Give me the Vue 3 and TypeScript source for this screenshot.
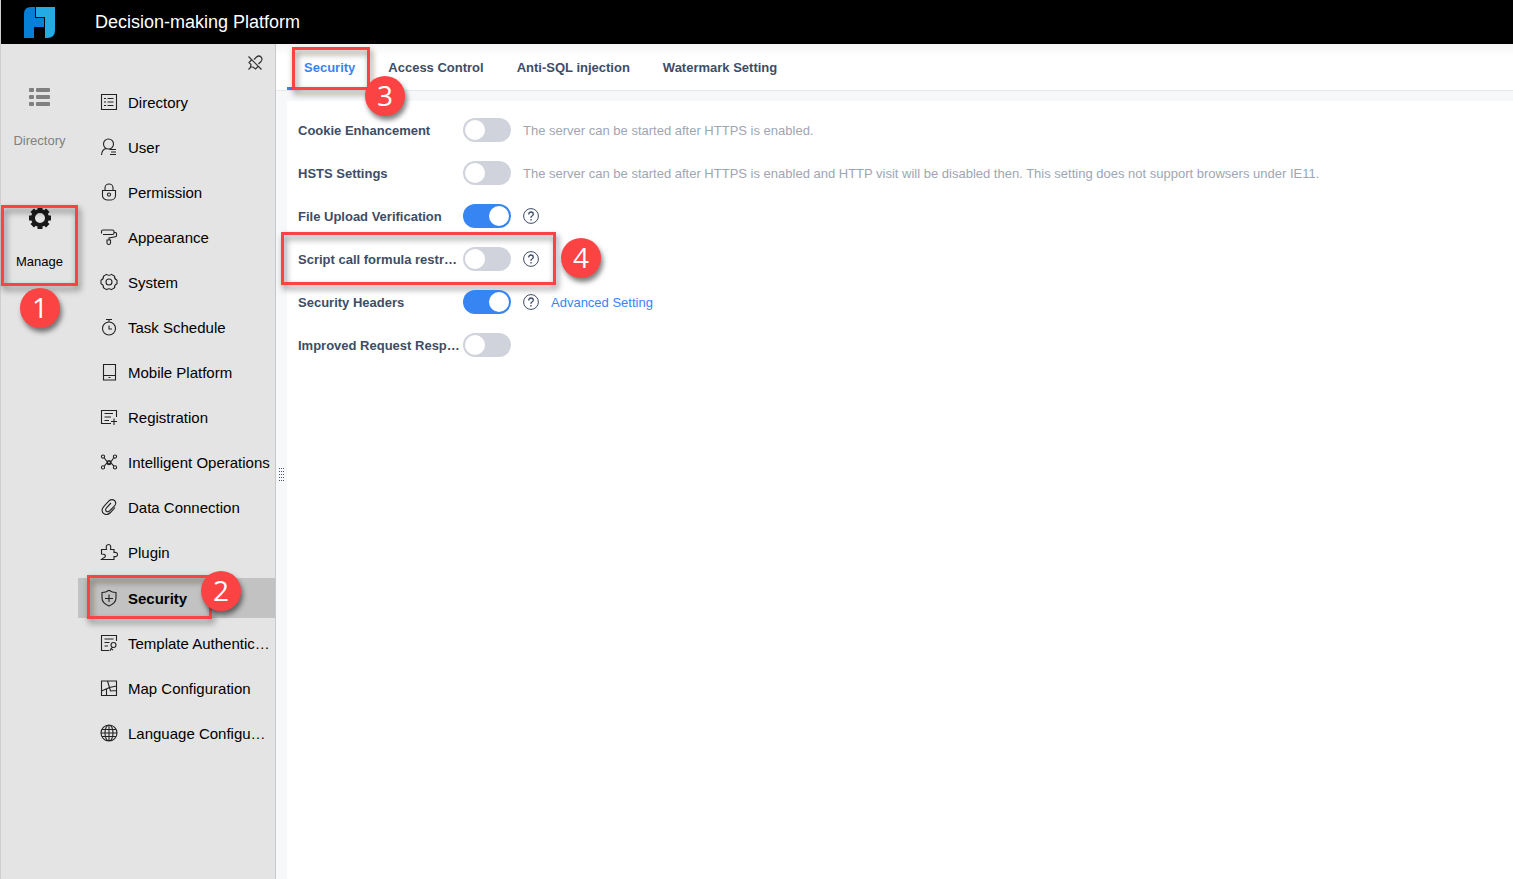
<script setup lang="ts">
import { ref } from 'vue'

interface MenuEntry {
  label: string
  icon: string
}

interface Setting {
  id: string
  label: string
  on: boolean
  hint?: string
  help?: boolean
  link?: string
  step?: string
}

const entries: MenuEntry[] = [
  { label: 'Directory', icon: 'M1.5 1.5h15v15h-15zM7.5 5.5H13.5M7.5 9H13.5M7.5 12.5H13.5M4 5.5H6M4 9H6M4 12.5H6' },
  { label: 'User', icon: 'M1.500 17c.3-4 2.500-6 4.500-6.500M8.5 1a5 5 0 1 1 0 10a5 5 0 1 1 0-10M9.5 11.5H16M11 14H16M10 16.5H16' },
  { label: 'Permission', icon: 'M2.5 7.5h13v5a4.500 4.500 0 0 1-4.500 4.500h-4a4.500 4.500 0 0 1-4.500-4.500zM5 7.5V5a4 4 0 0 1 8 0V7.5M9 10a1.600 1.600 0 1 1 0 3.200a1.600 1.600 0 1 1 0-3.200' },
  { label: 'Appearance', icon: 'M1.5 5.5V3.5q0-1.500 1.500-1.500H12.5q1.500 0 1.500 1.500V5q0 1.500-1.500 1.500H3M14 4.5h1.500q1 0 1 1V7.5q0 1-1 1.200L9 10V12M7 12h3.500v3q0 1.500-1.700 1.500T7 15z' },
  { label: 'System', icon: 'M6.6 1.3Q9 3.3 11.4 1.3L14.6 3.2Q14.1 6.2 17 7.2V10.8Q14.1 11.8 14.6 14.8L11.4 16.7Q9 14.7 6.6 16.7L3.4 14.8Q3.9 11.8 1 10.8V7.2Q3.9 6.2 3.4 3.2ZM9 6a3 3 0 1 1 0 6a3 3 0 1 1 0-6' },
  { label: 'Task Schedule', icon: 'M9 4a6.500 6.500 0 1 1 0 13a6.500 6.500 0 1 1 0-13M9 7.5V11H12M9 4V1.5M6 1.5H12' },
  { label: 'Mobile Platform', icon: 'M3.5 1.5h12v15.500h-12zM3.5 12.5H15.5M8.5 14.5H10.5' },
  { label: 'Registration', icon: 'M16.5 9V2.5H1.5V15.5H11M4.5 5.5H13M4.5 9H11M4.5 12.5H9M14 10.5V17M11 13.5H17' },
  { label: 'Intelligent Operations', icon: 'M3 2a1.600 1.600 0 1 1 0 3.200a1.600 1.600 0 1 1 0-3.200M15 2a1.600 1.600 0 1 1 0 3.200a1.600 1.600 0 1 1 0-3.200M3 12.8a1.600 1.600 0 1 1 0 3.200a1.600 1.600 0 1 1 0-3.200M15 12.8a1.600 1.600 0 1 1 0 3.200a1.600 1.600 0 1 1 0-3.200M9 7.5a2 2 0 1 1 0 4a2 2 0 1 1 0-4M4.2 4.8L9 11.5L13.8 4.8M4.2 13.2L9 7.5L13.8 13.2' },
  { label: 'Data Connection', icon: 'M15 9.5L10.5 14.5Q7.5 17.5 4.5 16Q1 14 2.5 10.5Q3 9 9 2.8Q12 .5 14.5 2.5Q17 5 14.5 8L9.5 13Q7.5 14.5 6 13Q5 11.5 6.5 9.8L11 5' },
  { label: 'Plugin', icon: 'M1.5 16.5Q2.5 15.500 5 14Q6.500 11 1.5 11V6.5H6.5Q5.5 1.5 8.5 1.5T10.5 6.5H14V9.5Q17.5 9 17.5 11.5T14 13.5V16.5Z' },
  { label: 'Security', icon: 'M9 1.2Q12 3.5 16 3.5V9Q16 14 9 17Q2 14 2 9V3.5Q6 3.5 9 1.2M9 5.5V13M5 9.5H13' },
  { label: 'Template Authentic…', icon: 'M16.5 7V1.5H1.5V16.5H9M4.5 5H13.5M4.5 8.5H9.5M4.5 12H8M13.5 8.5a2.500 2.500 0 1 1 0 5a2.500 2.500 0 1 1 0-5M12 13L9.8 17M11.2 14.8L13 16' },
  { label: 'Map Configuration', icon: 'M1.5 2h15v14.500h-15zM1.5 12L9.5 8.5L16.5 7M7.5 2L10.5 12L16.5 11.5M6.5 10V16' },
  { label: 'Language Configu…', icon: 'M9 1a8 8 0 1 1 0 16a8 8 0 1 1 0-16M9 1a4 8 0 1 1 0 16a4 8 0 1 1 0-16M9 1V17M1 9H17M2 5.5H16M2 12.5H16' },
]

const tabs = ['Security', 'Access Control', 'Anti-SQL injection', 'Watermark Setting']

const activeEntry = ref('Security')
const activeTab = ref('Security')

const settings = ref<Setting[]>([
  { id: 'cookie', label: 'Cookie Enhancement', on: false, hint: 'The server can be started after HTTPS is enabled.' },
  { id: 'hsts', label: 'HSTS Settings', on: false, hint: 'The server can be started after HTTPS is enabled and HTTP visit will be disabled then. This setting does not support browsers under IE11.' },
  { id: 'upload', label: 'File Upload Verification', on: true, help: true },
  { id: 'script', label: 'Script call formula restr…', on: false, help: true, step: '4' },
  { id: 'headers', label: 'Security Headers', on: true, help: true, link: 'Advanced Setting' },
  { id: 'request', label: 'Improved Request Resp…', on: false },
])
</script>

<template>
  <div class="app">
    <header class="topbar">
      <svg class="logo" width="32" height="32" viewBox="0 0 32 32" aria-hidden="true">
        <path d="M7 1H11V12H20V21H10V32H0V8Q0 1 7 1Z" fill="#0680d6" />
        <path d="M12 1H31V24Q31 32 23 32H21V11H12Z" fill="#23abe6" />
      </svg>
      <h1>Decision-making Platform</h1>
    </header>

    <div class="body">
      <nav class="rail" aria-label="Modules">
        <button type="button" class="module">
          <svg width="22" height="22" viewBox="0 0 22 22" fill="#808080" aria-hidden="true">
            <rect x="0" y="2" width="5" height="4" rx="1" /><rect x="7" y="2" width="14" height="4" rx="1" />
            <rect x="0" y="9" width="5" height="4" rx="1" /><rect x="7" y="9" width="14" height="4" rx="1" />
            <rect x="0" y="16" width="5" height="4" rx="1" /><rect x="7" y="16" width="14" height="4" rx="1" />
          </svg>
          <span>Directory</span>
        </button>
        <button type="button" class="module current">
          <svg width="22" height="22" viewBox="0 0 22 22" fill="none" stroke="#1a1a1a" aria-hidden="true">
            <circle cx="11" cy="11" r="7" stroke-width="4" />
            <path d="M11 0V4M11 18V22M0 11H4M18 11H22M3.2 3.2L6 6M16 16L18.8 18.8M3.2 18.8L6 16M16 6L18.8 3.2" stroke-width="5" />
          </svg>
          <span>Manage</span>
          <i class="frame frame-module"></i>
          <b class="step step-module">1</b>
        </button>
      </nav>

      <nav class="menu" aria-label="Manage">
        <div class="menu-head">
          <button type="button" class="pin" aria-label="Unpin menu">
            <svg width="16" height="16" viewBox="0 0 16 16" fill="none" stroke="#333" stroke-width="1.2" aria-hidden="true">
              <path d="M1.5 1.5L14.5 14.5M7 4.5L9.500 2Q12 0 14 2T14 6.5L11.500 9M4.5 5L2 7.5L4 9.5L3.5 12L6 12L8.5 14L11 11.500M4 12L1.500 14.500" />
            </svg>
          </button>
        </div>
        <ul>
          <li v-for="entry in entries" :key="entry.label" :class="{ 'selected-row': entry.label === activeEntry }">
            <button
              type="button"
              class="entry"
              :class="{ selected: entry.label === activeEntry }"
              @click="activeEntry = entry.label"
            >
              <svg width="18" height="18" viewBox="0 0 18 18" fill="none" stroke="#222" stroke-width="1.1" aria-hidden="true">
                <path :d="entry.icon" />
              </svg>
              <span>{{ entry.label }}</span>
            </button>
            <template v-if="entry.label === 'Security'">
              <i class="frame frame-entry"></i>
              <b class="step step-entry">2</b>
            </template>
          </li>
        </ul>
      </nav>

      <main class="content">
        <div class="tabs" role="tablist">
          <div v-for="tab in tabs" :key="tab" class="tab-cell">
            <button
              type="button"
              role="tab"
              class="tab"
              :class="{ active: tab === activeTab }"
              :aria-selected="tab === activeTab"
              @click="activeTab = tab"
            >
              {{ tab }}
            </button>
            <template v-if="tab === 'Security'">
              <i class="frame frame-tab"></i>
              <b class="step step-tab">3</b>
            </template>
          </div>
        </div>

        <div class="workspace">
          <div class="splitter">
            <svg width="5" height="13" viewBox="0 0 5 13" fill="#4b5268" aria-hidden="true">
              <template v-for="row in 5" :key="row">
                <rect v-for="col in 3" :key="col" :x="(col - 1) * 2" :y="(row - 1) * 3" width="1" height="1" />
              </template>
            </svg>
          </div>
          <section class="panel">
            <div v-for="setting in settings" :key="setting.id" class="row">
              <label :for="setting.id">{{ setting.label }}</label>
              <input :id="setting.id" v-model="setting.on" type="checkbox" role="switch" class="switch" />
              <span v-if="setting.hint" class="hint">{{ setting.hint }}</span>
              <button v-if="setting.help" type="button" class="help" :aria-label="'Help: ' + setting.label">
                <svg width="16" height="16" viewBox="0 0 16 16" fill="none" stroke="#3d4d66" aria-hidden="true">
                  <circle cx="8" cy="8" r="7.4" />
                  <path d="M5.7 6.4Q5.7 4 8 4T10.3 6.2Q10.3 7.3 9 8T8 9.8M8 11V12.5" stroke-width="1.3" />
                </svg>
              </button>
              <a v-if="setting.link" href="#">{{ setting.link }}</a>
              <template v-if="setting.step">
                <i class="frame frame-row"></i>
                <b class="step step-row">{{ setting.step }}</b>
              </template>
            </div>
          </section>
        </div>
      </main>
    </div>
  </div>
</template>

<style>
body {
  margin: 0;
}
</style>

<style scoped>
.app {
  display: flex;
  flex-direction: column;
  min-height: 100vh;
  box-sizing: border-box;
  border-left: 1px solid #cfcfcf;
  background: #fff;
  color: #000;
  font-family: "Liberation Sans", Arial, sans-serif;
  font-size: 13px;
}

button {
  padding: 0;
  border: 0;
  background: none;
  color: inherit;
  font: inherit;
  cursor: pointer;
}

svg {
  display: block;
  flex: none;
}

.topbar {
  display: flex;
  align-items: center;
  gap: 39px;
  height: 44px;
  padding-left: 23px;
  background: #000;
  color: #fff;
}

h1 {
  margin: 0;
  font-size: 18px;
  font-weight: 400;
}

.body {
  display: flex;
  flex: 1;
}

.rail {
  display: flex;
  flex-direction: column;
  gap: 58px;
  width: 77px;
  padding-top: 42px;
  flex: none;
  background: #e4e4e4;
}

.module {
  position: relative;
  display: flex;
  flex-direction: column;
  align-items: center;
  gap: 25px;
  color: #808080;
  line-height: 16px;
}

.module.current {
  color: #000;
}

.menu {
  flex: none;
  width: 197px;
  border-right: 1px solid #c8c8c8;
  background: #e4e4e4;
}

.menu-head {
  display: flex;
  justify-content: flex-end;
  align-items: center;
  height: 38px;
  padding-right: 12px;
}

.menu ul {
  display: flex;
  flex-direction: column;
  gap: 5px;
  margin: 0;
  padding: 0;
  list-style: none;
}

.menu li {
  position: relative;
}

.menu .selected-row {
  margin-top: 1px;
}

.entry {
  display: flex;
  align-items: center;
  gap: 10px;
  width: 100%;
  height: 40px;
  padding-left: 22px;
  font-size: 15px;
  white-space: nowrap;
}

.entry.selected {
  background: #c2c2c2;
  font-weight: 700;
}

.content {
  display: flex;
  flex: 1;
  flex-direction: column;
  min-width: 0;
}

.tabs {
  display: flex;
  height: 46px;
  padding-left: 11px;
  border-bottom: 1px solid #e6e8ec;
  background: linear-gradient(#f5f5f5, #fff 12px);
}

.tab-cell {
  position: relative;
  display: flex;
}

.tab {
  padding: 3px 16px 0 17px;
  border-bottom: 3px solid transparent;
  color: #3d4d66;
  font-weight: 700;
}

.tab.active {
  border-bottom-color: #3685f2;
  color: #3685f2;
}

.workspace {
  display: flex;
  flex: 1;
  padding-top: 10px;
  background: #f7f8fa;
}

.splitter {
  display: flex;
  flex: none;
  align-items: center;
  justify-content: center;
  width: 11px;
  padding-bottom: 32px;
}

.panel {
  display: flex;
  flex: 1;
  flex-direction: column;
  gap: 19px;
  padding: 17px 11px;
  background: #fff;
}

.row {
  position: relative;
  display: flex;
  align-items: center;
  gap: 12px;
  height: 24px;
  color: #3d4d66;
}

.row label {
  width: 165px;
  margin-right: -12px;
  font-weight: 700;
  white-space: nowrap;
}

.switch {
  appearance: none;
  flex: none;
  box-sizing: border-box;
  width: 48px;
  height: 24px;
  margin: 0;
  padding: 2px;
  border-radius: 12px;
  background: #d0d3db;
  cursor: pointer;
}

.switch::before {
  display: block;
  width: 20px;
  height: 20px;
  border-radius: 50%;
  background: #fff;
  content: "";
}

.switch:checked {
  padding-left: 26px;
  background: #3685f2;
}

.hint {
  color: #9ea6b2;
}

.row a {
  color: #3685f2;
  text-decoration: none;
}

.frame {
  position: absolute;
  border: 3px solid #fc4343;
  filter: drop-shadow(2px 4px 3px rgba(0, 0, 0, 0.5));
  pointer-events: none;
}

.step {
  position: absolute;
  z-index: 1;
  width: 40px;
  height: 40px;
  border-radius: 50%;
  background: #fc4343;
  box-shadow: 2px 4px 5px rgba(0, 0, 0, 0.5);
  color: #fff;
  font-family: "Open Sans", "Noto Sans", sans-serif;
  font-size: 28px;
  font-weight: 400;
  line-height: 38px;
  text-align: center;
}

.frame-module {
  inset: -2px 0 -16px 0;
}

.step-module {
  top: 81px;
  left: 19px;
}

.frame-entry {
  inset: -3px 63px -1px 9px;
}

.step-entry {
  top: -7px;
  left: 123px;
}

.frame-tab {
  inset: 3px 1px 0 5px;
}

.step-tab {
  top: 32px;
  left: 78px;
}

.frame-row {
  top: -15px;
  left: -17px;
  width: 269px;
  height: 47px;
}

.step-row {
  top: -9px;
  left: 263px;
}
</style>
